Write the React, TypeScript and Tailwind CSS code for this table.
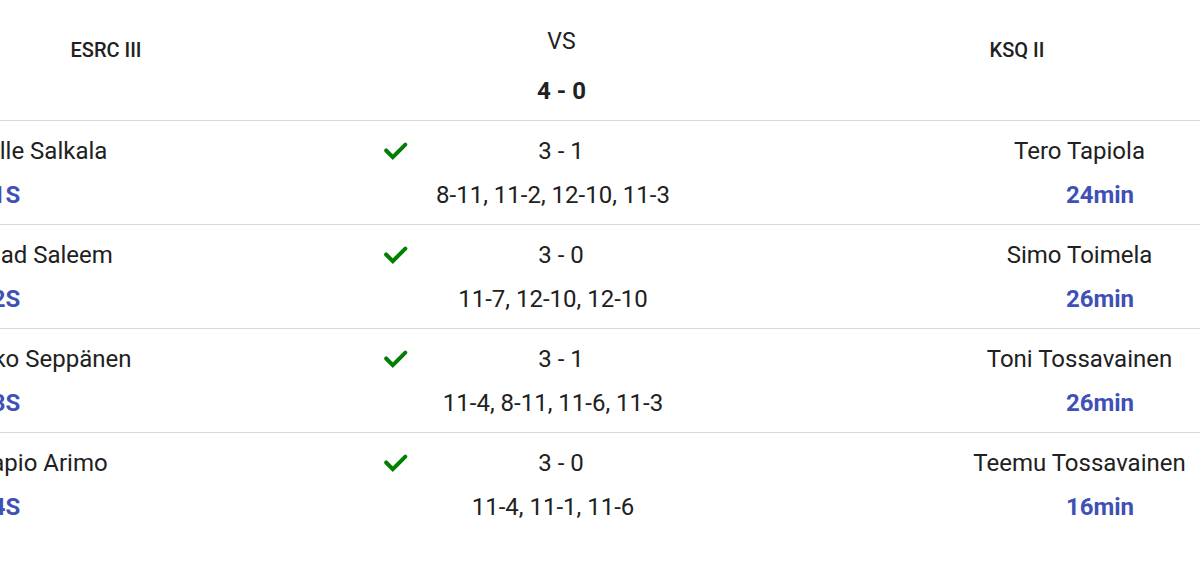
const matches = [
  { home: 'Ville Salkala', homeTime: '1S', score: '3 - 1', sets: '8-11, 11-2, 12-10, 11-3', away: 'Tero Tapiola', awayTime: '24min' },
  { home: 'Imad Saleem', homeTime: '2S', score: '3 - 0', sets: '11-7, 12-10, 12-10', away: 'Simo Toimela', awayTime: '26min' },
  { home: 'Mikko Seppänen', homeTime: '3S', score: '3 - 1', sets: '11-4, 8-11, 11-6, 11-3', away: 'Toni Tossavainen', awayTime: '26min' },
  { home: 'Tapio Arimo', homeTime: '4S', score: '3 - 0', sets: '11-4, 11-1, 11-6', away: 'Teemu Tossavainen', awayTime: '16min' },
]

function CheckIcon({ className }: { className?: string }) {
  return (
    <svg viewBox="0 0 24 24" className={className} fill="none" stroke="currentColor" strokeWidth={3} strokeLinecap="round" strokeLinejoin="miter">
      <polyline points="4.6,11.6 9.6,16.6 19,7.2" />
    </svg>
  )
}

export default function App() {
  return (
    <div className="h-[588px] w-[1200px] overflow-hidden bg-white font-['Roboto',sans-serif] text-[#212121]">
      <div className="ml-[-77px] w-[1277px]">
        {/* header */}
        <div className="grid h-[121px] grid-cols-[366px_545px_366px] border-b border-[#d9d9d9]">
          <div className="pt-[36px] text-center text-[20px] font-medium leading-[28px]">ESRC III</div>
          <div className="flex flex-col items-center pt-[28px]">
            <div className="text-[23px] leading-[28px]">VS</div>
            <div className="mt-[21px] text-[24px] font-bold leading-[28px]">4 - 0</div>
          </div>
          <div className="pt-[36px] text-center text-[20px] font-medium leading-[28px]">KSQ II</div>
        </div>

        {matches.map((m, i) => (
          <div
            key={i}
            className={`pt-[8px] pb-[7px] text-[24px] ${i < matches.length - 1 ? 'border-b border-[#d9d9d9]' : ''}`}
          >
            <div className="grid h-[44px] grid-cols-[240px_213px_40px_290px_40px_213px_241px] items-center">
              <div className="whitespace-nowrap text-center">{m.home}</div>
              <div />
              <div className="flex justify-center">
                <CheckIcon className="h-[32px] w-[32px] text-[#008000]" />
              </div>
              <div className="text-center">{m.score}</div>
              <div />
              <div />
              <div className="whitespace-nowrap text-center">{m.away}</div>
            </div>
            <div className="grid h-[44px] grid-cols-[166px_928px_166px] items-center">
              <div className="text-center font-bold text-[#3f51b5]">{m.homeTime}</div>
              <div className="text-center">{m.sets}</div>
              <div className="text-center font-bold text-[#3f51b5]">{m.awayTime}</div>
            </div>
          </div>
        ))}
      </div>
    </div>
  )
}
